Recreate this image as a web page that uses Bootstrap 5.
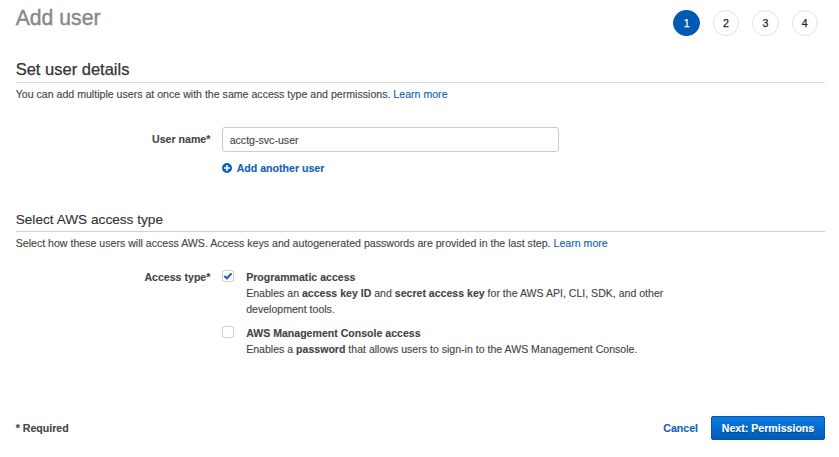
<!DOCTYPE html>
<html lang="en">
<head>
<meta charset="utf-8">
<meta name="viewport" content="width=device-width, initial-scale=1">
<title>Add user</title>
<link href="https://cdn.jsdelivr.net/npm/bootstrap@5.3.0/dist/css/bootstrap.min.css" rel="stylesheet">
<style>
body { font-family: "Liberation Sans", Arial, sans-serif; font-size: 10.6px; line-height: 16px; color: #444; background: #fff; -webkit-text-stroke: .12px currentColor; }
.page { height: 457px; padding: 0 14px 0 15.7px; overflow: hidden; }
a { color: #1161b5; text-decoration: none; }
.page-head { height: 59px; }
.page-title { font-size: 21.2px; line-height: 24px; color: #888; margin-top: 6px; -webkit-text-stroke: .4px #888; }
.steps { gap: 13px; padding: 9.5px 7px 0 0; }
.step { width: 26.4px; height: 26.4px; border: 1px solid #e3e3e3; color: #222; -webkit-text-stroke: .25px currentColor; }
.step.current { background: #0059b3; border-color: #0059b3; color: #fff; }
.section-title { font-size: 16.5px; line-height: 20px; height: 24px; border-bottom: 1px solid #dcdcdc; color: #333; -webkit-text-stroke: .25px currentColor; }
.sub-title { font-size: 13.65px; line-height: 19px; height: 22px; border-bottom: 1px solid #d2d2d2; color: #333; }
.section-note { padding-top: 3px; }
.user-row { margin-top: 25px; }
.field-label { width: 194.7px; flex: none; text-align: right; font-weight: 700; margin-right: 11.3px; }
.name-label { padding-top: 4px; }
.user-input { width: 337px; height: 25px; border: 1px solid #ccc; border-radius: 3px; padding: 0 7px; font-size: 10.6px; color: #444; }
.add-link { margin-top: 8px; gap: 5px; }
.access-head { margin-top: 34px; }
.access-row { margin-top: 18px; }
.check-input.form-check-input { width: 12px; height: 12px; margin: 1px 12.5px 0 0; border: 1px solid #ccc; border-radius: 2.5px; flex: none; }
.check-input.form-check-input:checked { background: #fff; border-color: #ccc; }
.check-wrap { position: relative; height: 16px; flex: none; }
.check-wrap svg { position: absolute; left: 1px; top: 2px; pointer-events: none; }
.choice-text { width: 430px; font-size: 10.57px; }
.page-foot { margin-top: 59px; }
.cancel-link { margin-right: 13px; }
.next-btn { width: 114px; height: 24px; padding: 0; font-size: 10.6px; line-height: 22px; font-weight: 700; border: 1px solid #0555a8; border-radius: 2px; background: linear-gradient(#0d7be4, #005bb8); color: #fff; text-shadow: 0 1px 1px rgba(0,0,0,.35); }
</style>
</head>
<body>
<main class="page">
  <header class="page-head d-flex justify-content-between align-items-start">
    <h1 class="page-title mb-0 fw-normal">Add user</h1>
    <div class="steps d-flex">
      <span class="step current rounded-circle d-flex align-items-center justify-content-center">1</span>
      <span class="step rounded-circle d-flex align-items-center justify-content-center">2</span>
      <span class="step rounded-circle d-flex align-items-center justify-content-center">3</span>
      <span class="step rounded-circle d-flex align-items-center justify-content-center">4</span>
    </div>
  </header>

  <section>
    <h2 class="section-title mb-0 fw-normal">Set user details</h2>
    <p class="section-note mb-0">You can add multiple users at once with the same access type and permissions. <a href="#">Learn more</a></p>
    <div class="user-row d-flex">
      <label class="field-label name-label" for="username">User name*</label>
      <div>
        <input class="user-input form-control" id="username" type="text" value="acctg-svc-user">
        <a class="add-link d-flex align-items-center fw-bold" href="#">
          <svg width="10" height="10" viewBox="0 0 10 10" aria-hidden="true"><circle cx="5" cy="5" r="5" fill="#0f60b6"/><path d="M5 2v6M2 5h6" stroke="#fff" stroke-width="1.5"/></svg>
          <span>Add another user</span>
        </a>
      </div>
    </div>
  </section>

  <section class="access-head">
    <h3 class="sub-title mb-0 fw-normal">Select AWS access type</h3>
    <p class="section-note mb-0">Select how these users will access AWS. Access keys and autogenerated passwords are provided in the last step. <a href="#">Learn more</a></p>
    <div class="access-row d-flex">
      <div class="field-label">Access type*</div>
      <div>
        <div class="d-flex">
          <span class="check-wrap d-flex"><input class="check-input form-check-input" id="prog" type="checkbox" checked><svg width="10" height="10" viewBox="0 0 10 10" aria-hidden="true"><path d="M1.3 5 3.9 7.3 8.6 2.4" fill="none" stroke="#0d62bd" stroke-width="2"/></svg></span>
          <div class="choice-text">
            <label class="fw-bold d-block" for="prog">Programmatic access</label>
            <div>Enables an <strong>access key ID</strong> and <strong>secret access key</strong> for the AWS API, CLI, SDK, and other</div>
            <div>development tools.</div>
          </div>
        </div>
        <div class="d-flex mt-2">
          <span class="check-wrap d-flex"><input class="check-input form-check-input" id="console" type="checkbox"></span>
          <div class="choice-text">
            <label class="fw-bold d-block" for="console">AWS Management Console access</label>
            <div>Enables a <strong>password</strong> that allows users to sign-in to the AWS Management Console.</div>
          </div>
        </div>
      </div>
    </div>
  </section>

  <footer class="page-foot d-flex align-items-center justify-content-between fw-bold">
    <span>* Required</span>
    <div class="d-flex align-items-center">
      <a href="#" class="cancel-link">Cancel</a>
      <button class="next-btn btn" type="button">Next: Permissions</button>
    </div>
  </footer>
</main>
<script src="https://cdn.jsdelivr.net/npm/bootstrap@5.3.0/dist/js/bootstrap.bundle.min.js"></script>
</body>
</html>
